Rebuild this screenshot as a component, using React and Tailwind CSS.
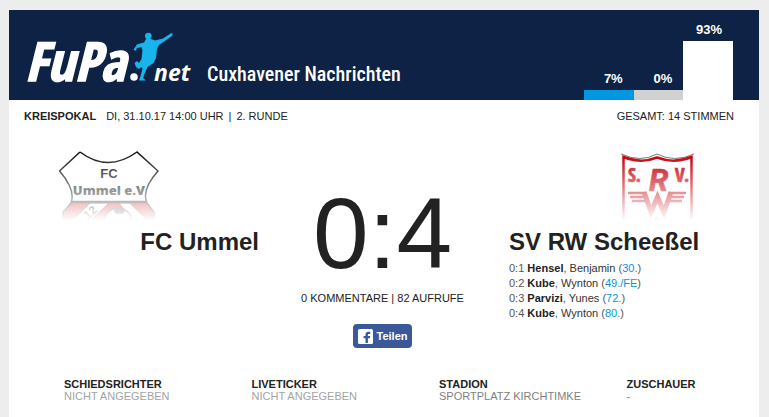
import React from "react";

const votes = [
  { label: "7%", bar: "h-[10px] bg-[#0096e0]" },
  { label: "0%", bar: "h-[10px] bg-[#d0d2d2]" },
  { label: "93%", bar: "h-[59px] bg-white" },
];

const goals = [
  { score: "0:1", last: "Hensel", first: "Benjamin", minute: "30." },
  { score: "0:2", last: "Kube", first: "Wynton", minute: "49./FE" },
  { score: "0:3", last: "Parvizi", first: "Yunes", minute: "72." },
  { score: "0:4", last: "Kube", first: "Wynton", minute: "80." },
];

const facts = [
  { term: "SCHIEDSRICHTER", value: "NICHT ANGEGEBEN", tone: "text-[#a3a3a3]" },
  { term: "LIVETICKER", value: "NICHT ANGEGEBEN", tone: "text-[#a3a3a3]" },
  { term: "STADION", value: "SPORTPLATZ KIRCHTIMKE", tone: "text-[#808080]" },
  { term: "ZUSCHAUER", value: "-", tone: "text-[#808080]" },
];

function Logo() {
  return (
    <svg viewBox="0 0 168 54" className="h-[54px] w-[168px] overflow-visible" role="img" aria-label="FuPa.net">
      <g fill="#fff" fontStyle="italic" fontWeight="700">
        <text x="0" y="49" fontSize="54" fontFamily="'Open Sans Condensed', 'Open Sans', sans-serif" stroke="#fff" strokeWidth="1.500">FuPa</text>
        <text x="129" y="49" fontSize="23" fontFamily="'Open Sans', sans-serif">net</text>
        <circle cx="109" cy="45" r="3.800" />
      </g>
      <g fill="#18b4ec">
        <circle cx="123.300" cy="4" r="3.300" />
        <path d="M121 7L126 7L130 8.500L138 6.500L146 1.200L147.800 1.500L147 4L139 9.500L134 13L132 17L131 26L128.500 31L122.500 35L119.500 42L118 46L121 48.500H114L115.500 44L117.500 37L116.500 35L114 37L111 35L109.500 31L112 29L114 31L116.500 27L117.500 18L116.500 15L112 16L110.500 19L108.500 17.500L112 12.500L119 10.500z" />
      </g>
    </svg>
  );
}

function UmmelCrest() {
  return (
    <svg viewBox="0 0 100 72" className="h-[72px] w-[100px]" role="img" aria-label="Wappen FC Ummel">
      <defs>
        <linearGradient id="ummelFade" x1="0" y1="0" x2="0" y2="1">
          <stop offset="0.050" stopColor="#fff" stopOpacity="0" />
          <stop offset="0.980" stopColor="#fff" stopOpacity="1" />
        </linearGradient>
      </defs>
      <path d="M12 53H88L95 62V72H4V62z" fill="#d0141c" />
      <path d="M31 53H50L30 72H12zM60 53H71L90 72H72z" fill="#fff" stroke="#222" />
      <path d="M50 56L60 53L67 61L54 66L44 72L38 69z" fill="#d0141c" />
      <circle cx="59" cy="72" r="14" fill="#fff" stroke="#222" strokeWidth="1.500" />
      <path d="M54 60l6-2 7 2-3 4h-7z" fill="#222" />
      <text transform="translate(29 70) rotate(-42)" fontSize="12" fontWeight="700" fontFamily="'Liberation Sans', sans-serif">12</text>
      <path d="M21 2Q49 23 78 2L99 21Q82 40 88 53L95 62V72M21 2L0.500 21Q17 40 12 53L4 62V72" fill="none" stroke="#111" strokeWidth="1.500" />
      <path d="M12 52H88" stroke="#111" strokeWidth="2.500" />
      <g fill="#111" fontWeight="700" textAnchor="middle">
        <text x="50" y="28" fontSize="13" fontFamily="'Liberation Sans', sans-serif">FC</text>
        <text x="50" y="45" fontSize="13" fontWeight="900" fontFamily="'Open Sans', sans-serif">Ummel e.V</text>
      </g>
      <rect width="100" height="72" fill="url(#ummelFade)" />
    </svg>
  );
}

function ScheesselCrest() {
  return (
    <svg viewBox="0 0 100 72" className="h-[72px] w-[100px]" role="img" aria-label="Wappen SV RW Scheeßel">
      <defs>
        <linearGradient id="scheesselFade" x1="0" y1="0" x2="0" y2="1">
          <stop offset="0.080" stopColor="#fff" stopOpacity="0" />
          <stop offset="0.980" stopColor="#fff" stopOpacity="1" />
        </linearGradient>
      </defs>
      <path d="M13 4Q33 13 49 4Q66 13 86 4" fill="none" stroke="#777" strokeWidth="1" />
      <path d="M15.500 72V7Q33 14 49 7.500Q66 14 83.500 7V72" fill="none" stroke="#c8000a" strokeWidth="2.500" />
      <g fill="#c8000a" fontWeight="700" fontFamily="'Open Sans Condensed', 'Open Sans', sans-serif">
        <text x="20" y="32" fontSize="19" stroke="#c8000a" strokeWidth="0.700">S.</text>
        <text x="67" y="32" fontSize="19" stroke="#c8000a" strokeWidth="0.700">V.</text>
        <text x="41" y="41" fontSize="31" fontStyle="italic" fontFamily="Roboto, sans-serif" stroke="#c8000a" strokeWidth="0.700">R</text>
      </g>
      <g fill="none" stroke="#c8000a">
        <path d="M20 43H38M61 43H78M22 47H38M61 47H76M24 51H40M59 51H74" strokeWidth="2.500" />
        <path d="M36 42L43 62L49.500 47L56 62L63 42" strokeWidth="5" />
      </g>
      <path d="M43 70Q49 65 55 70" fill="#c8000a" />
      <rect width="100" height="72" fill="url(#scheesselFade)" />
    </svg>
  );
}

export default function App() {
  return (
    <div className="min-h-screen bg-[#ededed] pl-[9px] pt-[10px] pr-[10px] font-['Liberation_Sans',Arial,sans-serif] text-[11px] leading-[15px] text-[#222]">
      <main className="min-h-[calc(100vh-10px)] bg-white">
        <header className="flex h-[90px] bg-[#0d2244] pl-4 pr-[26px]">
          <a href="#" className="mt-[22px] shrink-0 self-start">
            <Logo />
          </a>
          <span className="ml-[14px] mt-[48px] whitespace-nowrap font-['Roboto_Condensed',Roboto,sans-serif] text-[20px] font-medium leading-[32px] text-white">
            Cuxhavener Nachrichten
          </span>
          <div className="ml-auto flex w-[149px] items-end">
            {votes.map((v) => (
              <div key={v.label} className="flex-1 text-right text-[13px] font-bold text-white">
                <div className="mb-1 pr-[11px]">{v.label}</div>
                <div className={v.bar} />
              </div>
            ))}
          </div>
        </header>

        <div className="flex justify-between pl-[15px] pr-[25px] pt-[9px]">
          <p className="flex">
            <strong className="mr-[10px]">KREISPOKAL</strong>
            <span>DI, 31.10.17 14:00 UHR</span>
            <span className="mx-[5px]">|</span>
            <span>2. RUNDE</span>
          </p>
          <p>GESAMT: 14 STIMMEN</p>
        </div>

        <section className="grid grid-cols-3 pt-[26px]">
          <div className="flex flex-col">
            <div className="pl-[50px]">
              <UmmelCrest />
            </div>
            <h2 className="mt-[6px] text-right text-[24px] font-bold leading-[28px]">FC Ummel</h2>
          </div>

          <div className="flex flex-col items-center pr-[3px] pt-[33px]">
            <div className="text-[100px] leading-[100px]">0:4</div>
            <p className="mt-[8px] whitespace-nowrap">0 KOMMENTARE | 82 AUFRUFE</p>
            <button
              type="button"
              className="mt-[18px] flex h-6 items-center gap-1 rounded-[4px] bg-[#3b5998] px-[5px] text-[11px] font-bold text-white"
            >
              <svg viewBox="0 0 15 15" className="size-[15px]" aria-hidden="true">
                <rect width="15" height="15" rx="1.500" fill="#fff" />
                <path
                  fill="#3b5998"
                  d="M7.500 14V9.300H5.600V7h1.900V5.600C7.500 3.800 8.600 2.800 10.400 2.800h1.800V5H11c-.8 0-1.100.4-1.100 1.100V7h2.300l-.3 2.300H9.900V14z"
                />
              </svg>
              Teilen
            </button>
          </div>

          <div className="flex flex-col">
            <div className="flex justify-end pr-[51px]">
              <ScheesselCrest />
            </div>
            <h2 className="mt-[6px] whitespace-nowrap text-[24px] font-bold leading-[28px]">SV RW Scheeßel</h2>
            <ul className="mt-[5px]">
              {goals.map((g) => (
                <li key={g.score} className="text-[#555]">
                  {g.score} <b className="text-[#222]">{g.last}</b>, <span className="text-[#333]">{g.first}</span> (
                  <a href="#" className="text-[#0096e0]">{g.minute}</a>)
                </li>
              ))}
            </ul>
          </div>
        </section>

        <dl className="mt-[30px] grid grid-cols-4 leading-[12px]">
          {facts.map((f) => (
            <div key={f.term} className="whitespace-nowrap pl-[55px]">
              <dt className="font-bold">{f.term}</dt>
              <dd className={f.tone}>{f.value}</dd>
            </div>
          ))}
        </dl>
      </main>
    </div>
  );
}
